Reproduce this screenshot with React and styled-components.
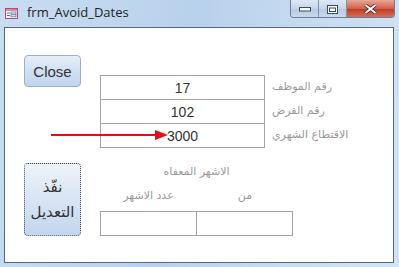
import React from "react";
import styled, { createGlobalStyle } from "styled-components";

const GlobalStyle = createGlobalStyle`
  html, body {
    margin: 0;
    padding: 0;
    background: #c4d9ef;
  }
`;

const fields = [
  { label: "رقم الموظف", value: "17" },
  { label: "رقم القرض", value: "102" },
  { label: "الاقتطاع الشهري", value: "3000" },
];

const App = () => {
  return (
    <>
      <GlobalStyle />
      <Window>
        <TitleBar>
          <FormIcon viewBox="0 0 13 11">
            <rect x="0.5" y="0.5" width="12" height="10" fill="#fff" stroke="#b04a7a" />
            <rect x="1" y="1" width="11" height="2" fill="#d88aa8" />
            <rect x="2" y="4.5" width="3" height="1" fill="#5a6f9a" />
            <rect x="2" y="7" width="3" height="1" fill="#5a6f9a" />
            <rect x="6" y="4" width="5" height="2" fill="none" stroke="#5a6f9a" strokeWidth="0.8" />
            <rect x="6" y="6.8" width="5" height="2" fill="none" stroke="#5a6f9a" strokeWidth="0.8" />
          </FormIcon>
          <Title>frm_Avoid_Dates</Title>
          <Caption>
            <CapButton>
              <svg width="12" height="5" viewBox="0 0 12 5">
                <rect x="0.5" y="0.5" width="11" height="3.5" fill="#fff" stroke="#3b4d66" />
              </svg>
            </CapButton>
            <CapButton>
              <svg width="11" height="9" viewBox="0 0 11 9">
                <rect x="0.5" y="0.5" width="10" height="8" fill="#fff" stroke="#3b4d66" />
                <rect x="2.5" y="3" width="6" height="3.5" fill="none" stroke="#3b4d66" />
              </svg>
            </CapButton>
            <CloseCap>
              <svg width="13" height="10" viewBox="0 0 13 10">
                <path d="M1.5 1 L11.5 9 M11.5 1 L1.5 9" stroke="#3a1a1a" strokeWidth="3.4" />
                <path d="M1.5 1 L11.5 9 M11.5 1 L1.5 9" stroke="#fff" strokeWidth="2" />
              </svg>
            </CloseCap>
          </Caption>
        </TitleBar>
        <Content>
          <TopRow>
            <Button>Close</Button>
            <Fields>
              {fields.map((f) => (
                <FieldRow key={f.label}>
                  <ValueBox>{f.value}</ValueBox>
                  <Label>{f.label}</Label>
                </FieldRow>
              ))}
            </Fields>
          </TopRow>
          <BottomRow>
            <ExecButton>
              نفّذ
              <br />
              التعديل
            </ExecButton>
            <Group>
              <GroupTitle>الاشهر المعفاه</GroupTitle>
              <GroupGrid>
                <SubHead>عدد الاشهر</SubHead>
                <SubHead>من</SubHead>
                <EmptyBox />
                <EmptyBox $last />
              </GroupGrid>
            </Group>
          </BottomRow>
          <Arrow width="118" height="12" viewBox="0 0 118 12">
            <line x1="0" y1="6" x2="106" y2="6" stroke="#e01010" strokeWidth="2.2" />
            <polygon points="104,1 117,6 104,11" fill="#e01010" />
          </Arrow>
        </Content>
      </Window>
    </>
  );
};

export default App;

/* Styled Components */
const Window = styled.div`
  width: 399px;
  height: 267px;
  box-sizing: border-box;
  padding: 0 5px 4px 4px;
  background: linear-gradient(100deg, #c9ddf1 0%, #b8d1ec 45%, #c7dbf0 70%, #d3e3f3 100%);
  display: flex;
  flex-direction: column;
`;

const TitleBar = styled.div`
  height: 27px;
  display: flex;
  align-items: flex-start;
  position: relative;
`;

const FormIcon = styled.svg`
  width: 13px;
  height: 11px;
  margin: 8px 0 0 1px;
`;

const Title = styled.div`
  font-family: "Open Sans", "DejaVu Sans", sans-serif;
  font-size: 13px;
  color: #1e1e1e;
  margin: 3px 0 0 9px;
`;

const Caption = styled.div`
  margin-left: auto;
  margin-right: -1px;
  display: flex;
  height: 17px;
  border: 1px solid #6d7f97;
  border-top: none;
  border-radius: 0 0 4px 4px;
  overflow: hidden;
`;

const CapButton = styled.div`
  width: 27px;
  display: flex;
  align-items: center;
  justify-content: center;
  padding-top: 2px;
  background: linear-gradient(#dfe9f5, #c4d5ea 50%, #b5c9e2 51%, #c9d9ec);
  border-right: 1px solid #8193ab;
`;

const CloseCap = styled.div`
  width: 47px;
  display: flex;
  align-items: center;
  justify-content: center;
  background: linear-gradient(#e7a796, #d3604a 50%, #c0391f 51%, #d4705a);
`;

const Content = styled.div`
  flex: 1;
  position: relative;
  background: #fff;
  border: 1px solid #55687f;
  padding: 27px 0 0 19px;
  display: flex;
  flex-direction: column;
`;

const TopRow = styled.div`
  display: flex;
  align-items: flex-start;
  gap: 19px;
`;

const Button = styled.div`
  width: 57px;
  height: 32px;
  box-sizing: border-box;
  border: 1px solid #9ab1cd;
  border-radius: 4px;
  background: linear-gradient(#e6eef8, #cfdff2 55%, #c1d5ee);
  display: flex;
  align-items: center;
  justify-content: center;
  font-family: "Liberation Sans", Arial, sans-serif;
  font-size: 15px;
  color: #333;
`;

const Fields = styled.div`
  margin-top: 20px;
  display: flex;
  flex-direction: column;
`;

const FieldRow = styled.div`
  display: flex;
  align-items: center;
  height: 24px;
`;

const ValueBox = styled.div`
  width: 165px;
  height: 25px;
  box-sizing: border-box;
  border: 1px solid #a5a5a5;
  margin-bottom: -1px;
  display: flex;
  align-items: center;
  justify-content: center;
  padding-top: 1px;
  font-family: "Liberation Sans", Arial, sans-serif;
  font-size: 14px;
  color: #333;
`;

const Label = styled.div`
  margin-left: 7px;
  direction: rtl;
  font-family: "DejaVu Sans", sans-serif;
  font-size: 11px;
  color: #9a9a9a;
  width: 90px;
  text-align: left;
  padding-bottom: 2px;
`;

const BottomRow = styled.div`
  display: flex;
  align-items: flex-start;
  gap: 19px;
  margin-top: 16px;
`;

const ExecButton = styled.div`
  width: 57px;
  height: 73px;
  box-sizing: border-box;
  border: 1px dotted #3d4a5c;
  border-radius: 4px;
  background: linear-gradient(#eef3fa, #d6e3f3 55%, #c3d6ef);
  display: flex;
  align-items: center;
  justify-content: center;
  text-align: center;
  direction: rtl;
  font-family: "DejaVu Sans", sans-serif;
  font-size: 15px;
  line-height: 25px;
  color: #333;
`;

const Group = styled.div`
  width: 193px;
  display: flex;
  flex-direction: column;
  align-items: center;
`;

const GroupTitle = styled.div`
  direction: rtl;
  font-family: "DejaVu Sans", sans-serif;
  font-size: 11px;
  color: #9a9a9a;
  height: 16px;
  line-height: 16px;
  margin-top: 1px;
`;

const GroupGrid = styled.div`
  width: 100%;
  display: grid;
  grid-template-columns: 97px 96px;
  grid-template-rows: 22px 25px;
  margin-top: 9px;
`;

const SubHead = styled.div`
  direction: rtl;
  text-align: center;
  font-family: "DejaVu Sans", sans-serif;
  font-size: 11px;
  color: #9a9a9a;
  line-height: 14px;
`;

const EmptyBox = styled.div`
  border: 1px solid #a5a5a5;
  border-left: ${(p) => (p.$last ? "none" : "1px solid #a5a5a5")};
`;

const Arrow = styled.svg`
  position: absolute;
  left: 46px;
  top: 101px;
`;
